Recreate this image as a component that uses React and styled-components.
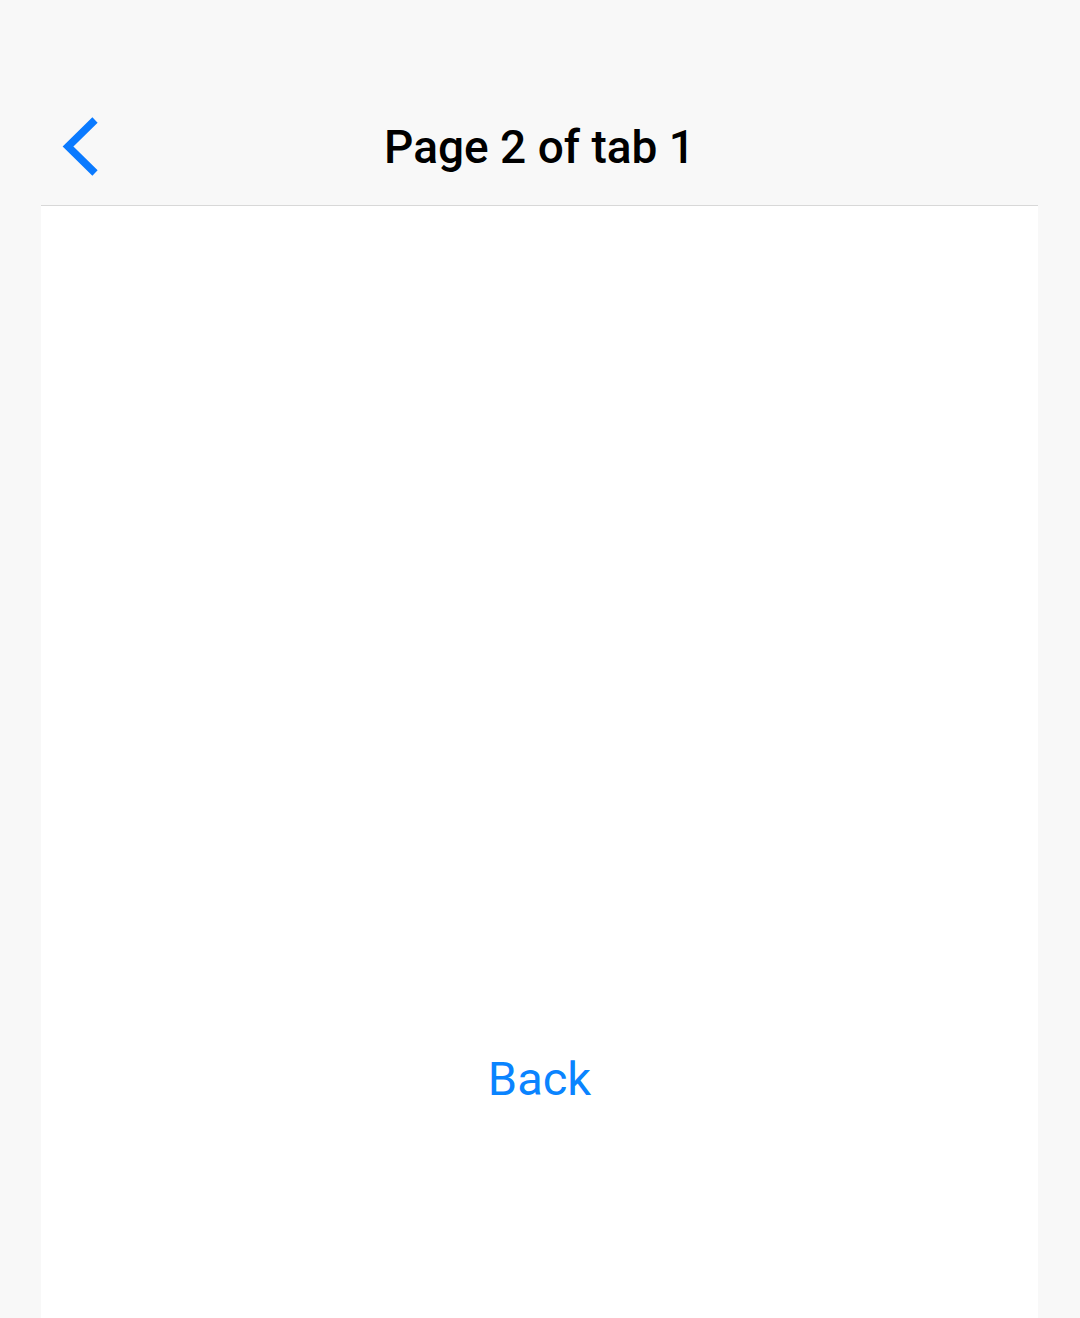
import React from "react";
import styled, { createGlobalStyle } from "styled-components";

const Global = createGlobalStyle`
  html, body { margin: 0; padding: 0; background: #f8f8f8; }
  body { font-family: Roboto, "Noto Sans", sans-serif; }
`;

const Screen = styled.div`
  width: 997px;
  height: 1318px;
  margin-left: 41px;
  background: #ffffff;
  display: flex;
  flex-direction: column;
`;

const Header = styled.header`
  background: #f8f8f8;
  padding-top: 88px;
  border-bottom: 1px solid #d8d8d8;
`;

const Bar = styled.div`
  height: 117px;
  display: grid;
  grid-template-columns: 120px 1fr 120px;
  align-items: center;
`;

const IconButton = styled.button`
  border: 0;
  background: none;
  padding: 0 0 0 20px;
  height: 100%;
  display: flex;
  align-items: center;
  cursor: pointer;
`;

const Title = styled.h1`
  margin: 0;
  text-align: center;
  font-family: Roboto, sans-serif;
  font-weight: 500;
  font-size: 46px;
  color: #000;
`;

const Body = styled.main`
  flex: 1;
  display: flex;
  justify-content: center;
  padding-top: 840px;
`;

const TextButton = styled.button`
  border: 0;
  background: none;
  padding: 0;
  height: 64px;
  font-family: Roboto, sans-serif;
  font-size: 47px;
  font-weight: 400;
  color: #0a84ff;
  cursor: pointer;
`;

export default function App() {
  return (
    <>
      <Global />
      <Screen>
        <Header>
          <Bar>
            <IconButton aria-label="Back">
              <svg width="40" height="60" viewBox="0 0 40 60">
                <path d="M34 3 L7 29.5 L34 56" fill="none" stroke="#0a7aff" strokeWidth="7.5" strokeLinecap="butt" strokeLinejoin="miter" />
              </svg>
            </IconButton>
            <Title>Page 2 of tab 1</Title>
            <div />
          </Bar>
        </Header>
        <Body>
          <TextButton>Back</TextButton>
        </Body>
      </Screen>
    </>
  );
}
